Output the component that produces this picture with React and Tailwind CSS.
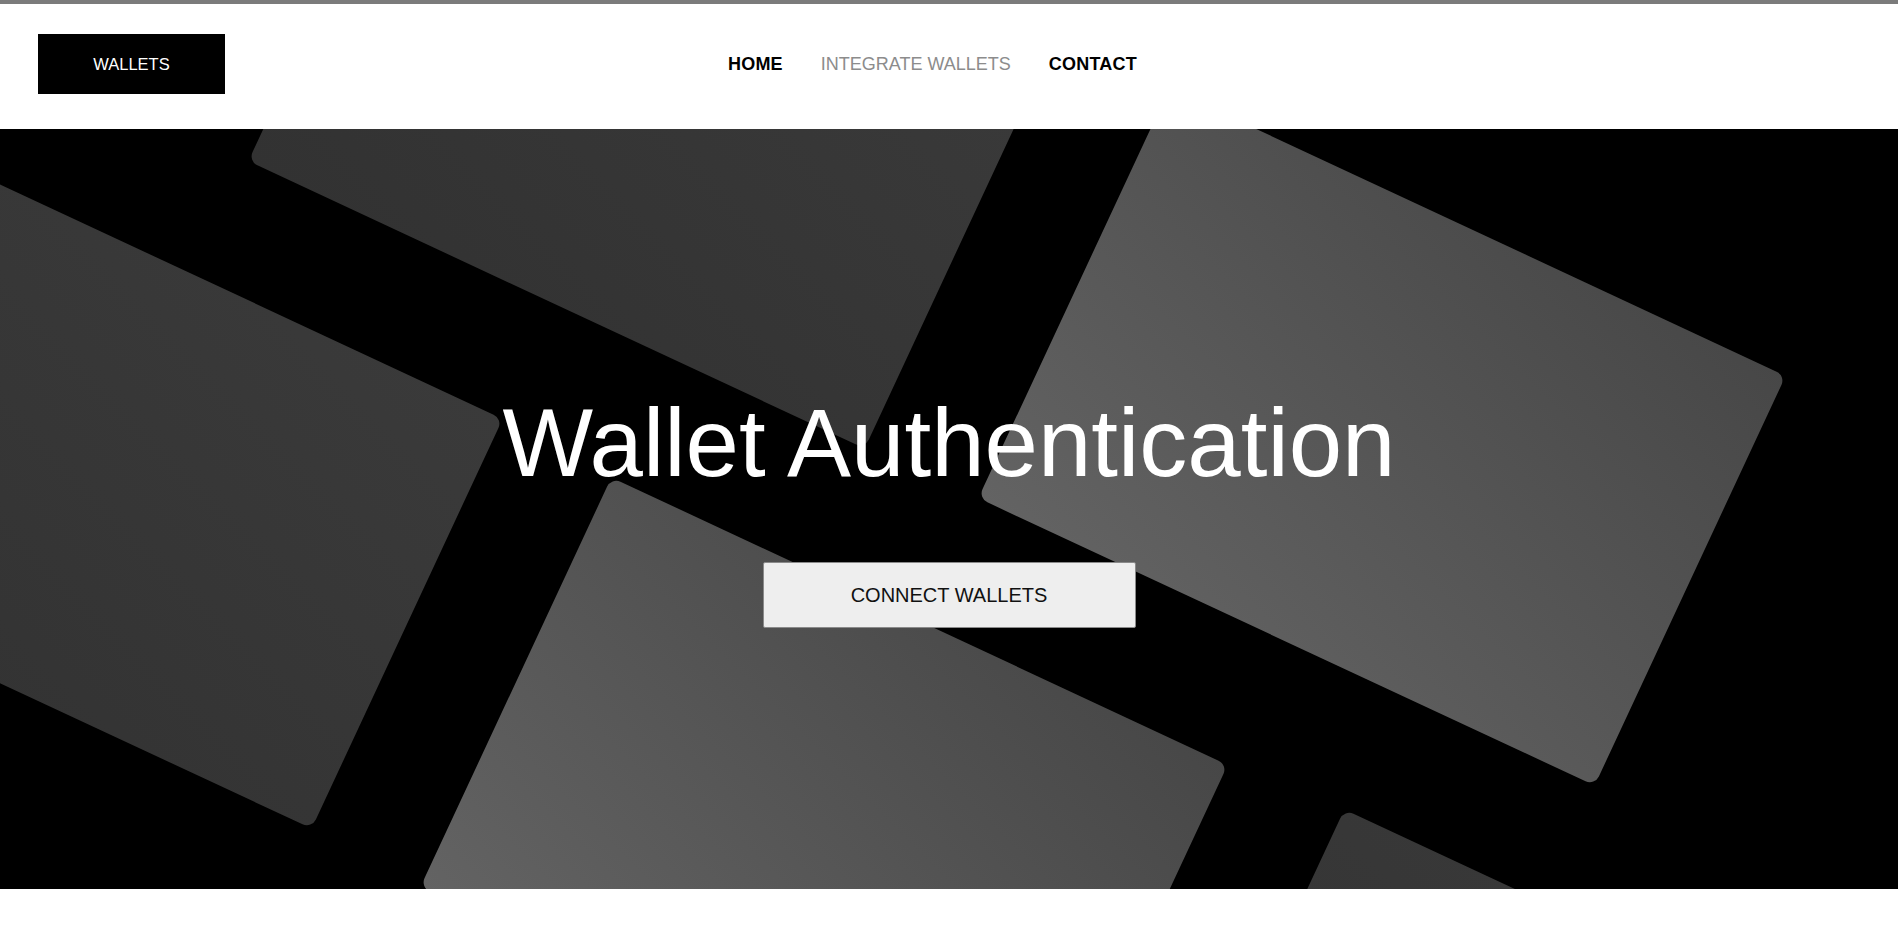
// Wallet landing — header bar + dark hero with rotated card shapes.
const CARDS = [
  // top-left offsets inside the hero, tone
  { left: 312, top: -255, tone: 'dark' },
  { left: -241, top: 125, tone: 'dark' },
  { left: 1042, top: 82, tone: 'light' },
  { left: 484, top: 471, tone: 'light' },
  { left: 1217, top: 803, tone: 'dark' },
];

export default function App() {
  return (
    <div className="min-h-[951px] bg-white font-['Liberation_Sans',Arial,sans-serif]">
      <div className="h-[4px] bg-[#7b7b7b]" />

      {/* Header */}
      <header className="h-[125px] flex items-start pt-[30px] pl-[38px]">
        <div className="flex items-center">
          <a className="w-[187px] h-[60px] bg-black text-white text-[16.5px] flex items-center justify-center">
            WALLETS
          </a>
          <nav className="ml-[503px] flex items-center gap-[38px] text-[18px]">
            <a className="font-bold text-black tracking-[0.2px]">HOME</a>
            <a className="text-[#8c8c8c]">INTEGRATE WALLETS</a>
            <a className="font-bold text-black tracking-[0.2px]">CONTACT</a>
          </nav>
        </div>
      </header>

      {/* Hero */}
      <section className="relative h-[760px] bg-black overflow-hidden flex flex-col items-center pt-[266px]">
        {CARDS.map((c, i) => (
          <div
            key={i}
            className={
              'absolute w-[680px] h-[452px] rounded-[10px] rotate-[25deg] ' +
              (c.tone === 'light'
                ? 'bg-[linear-gradient(20deg,#636363,#474747)]'
                : 'bg-[linear-gradient(20deg,#323232,#3a3a3a)]')
            }
            style={{ left: c.left, top: c.top }}
          />
        ))}

        <h1 className="relative text-white text-[96px] leading-none">Wallet Authentication</h1>
        <button className="relative mt-[71px] w-[373px] h-[66px] bg-[#eeeeee] border border-[#8a8a8a] rounded-[2px] text-[20px] text-[#111]">
          CONNECT WALLETS
        </button>
      </section>
    </div>
  );
}
